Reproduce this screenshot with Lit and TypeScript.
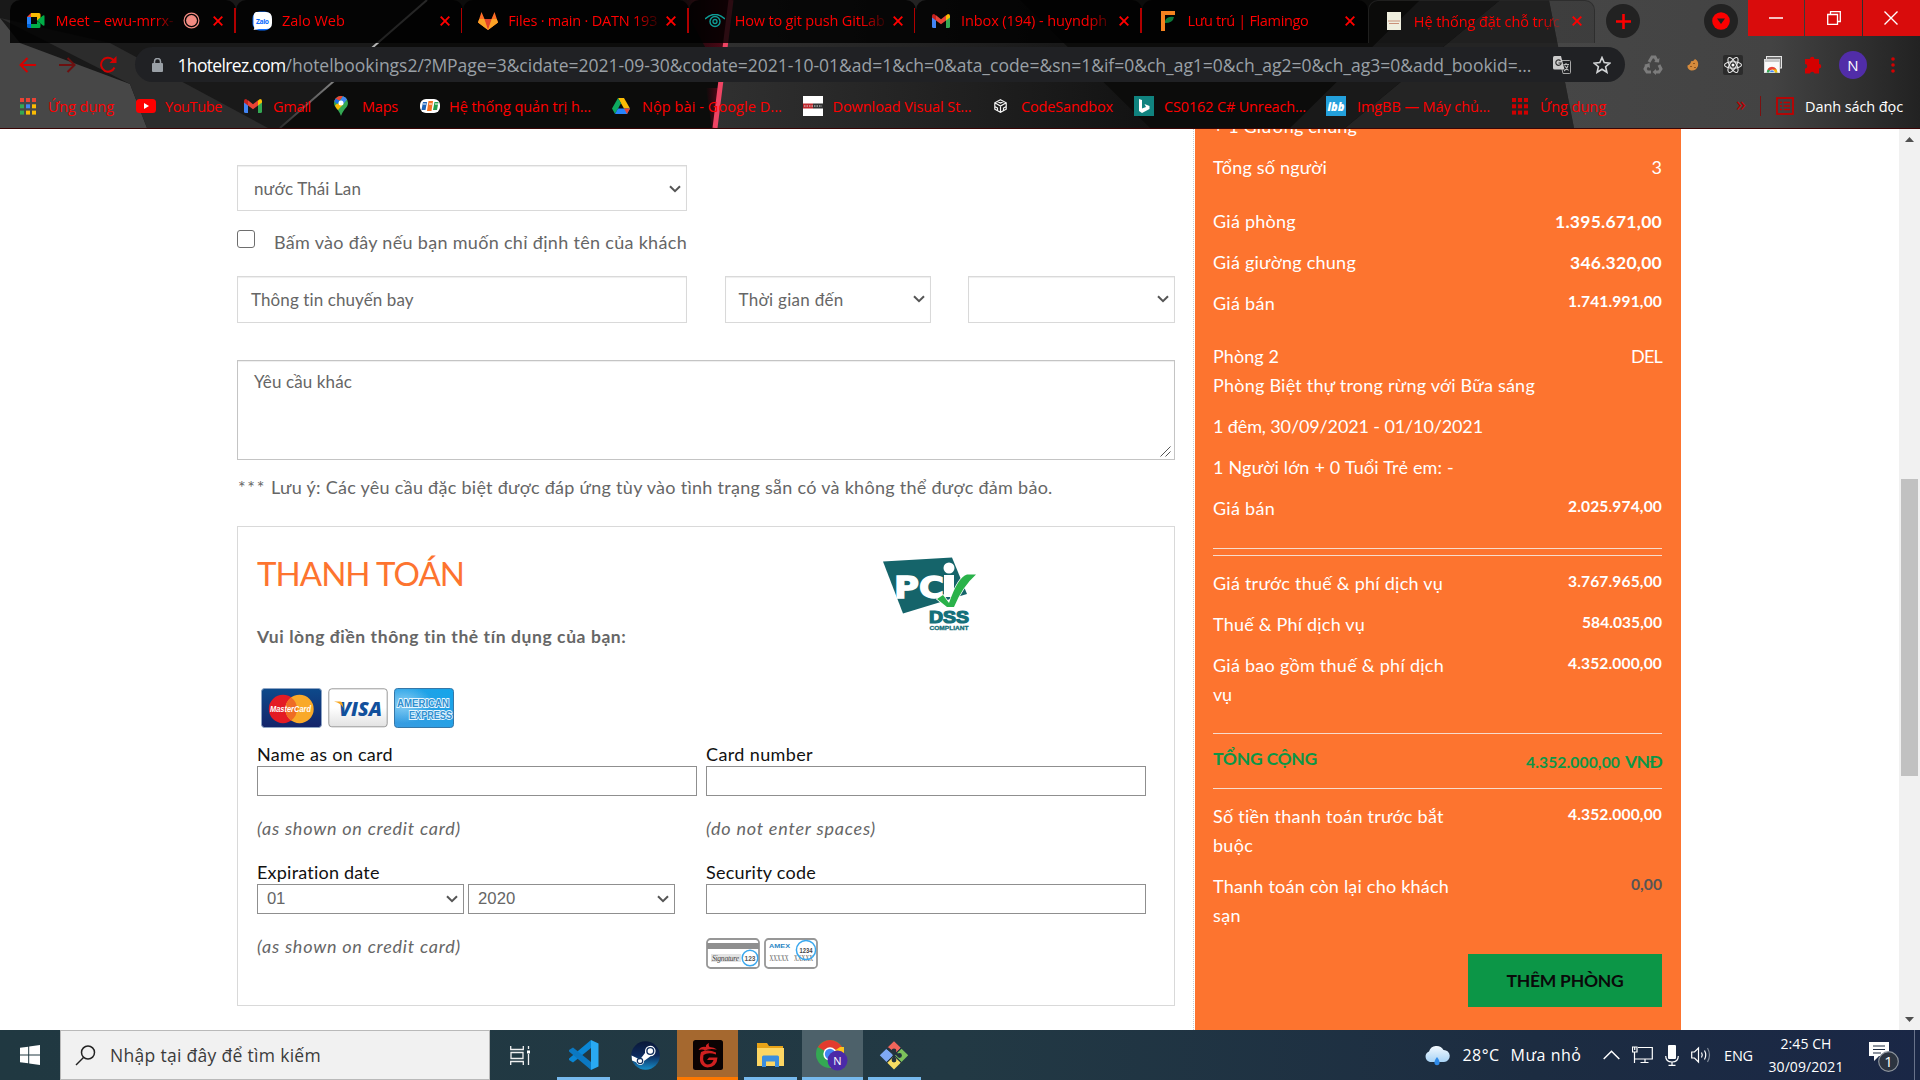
import { LitElement, html, css, svg, nothing } from "lit";
import { customElement, property } from "lit/decorators.js";

/* Text run that tracks its letters so that it fills a given measure. */
@customElement("fit-text")
class FitText extends LitElement {
  @property({ type: Number }) w = 0;
  static styles = css`
    :host { display: inline-block; white-space: pre; }
  `;
  render() { return html`<slot></slot>`; }
  firstUpdated() {
    const n = (this.textContent || "").length;
    const natural = this.getBoundingClientRect().width;
    if (this.w && n > 1) this.style.letterSpacing = `${((this.w - natural) / n).toFixed(3)}px`;
  }
}

const fit = (text: string, w: number) => html`<fit-text .w=${w}>${text}</fit-text>`;

/* ---------- icons ---------- */
const icon = (w: number, h: number, body: unknown, vb = `0 0 ${w} ${h}`) =>
  html`<svg width=${w} height=${h} viewBox=${vb} fill="none" preserveAspectRatio="none">${body}</svg>`;

const meet = icon(19, 17, svg`<path d="M5 1V5H1z" fill="#ea4335"/><path d="M5 1H13Q14.500 1 14.500 2.500V6L11 9V5H5z" fill="#fbbc04"/><path d="M1 5H5V12H1z" fill="#2684fc"/><path d="M1 12H5V16H2.500Q1 16 1 14.500z" fill="#0066da"/><path d="M5 12H11V9L14.500 11.500V14.500Q14.500 16 13 16H5z" fill="#00ac47"/><path d="M11 8.500L17 3.500Q18.500 3 18.500 4V13Q18.500 14 17 13.500z" fill="#00ac47"/>`);
const zalo = icon(20, 20, svg`<rect x=".5" y=".5" width="19" height="19" rx="7" fill="#0a6cff"/><path d="M4 1H14Q20 1 20 8V12Q20 18 14 18H7L1.500 19Q3 17 1.500 14V6Q1.500 2 4 1z" fill="#fff"/><text x="4" y="12.500" font-size="6.800" font-weight="700" textLength="13" font-family="Open Sans, sans-serif" fill="#0a6cff">Zalo</text>`);
const gitlab = icon(20, 18, svg`<path d="M10 18L0 10.500 3.500 0 6.500 7H13.500L16.500 0 20 10.500z" fill="#fc6d26"/><path d="M10 18L6.300 7H13.700z" fill="#e24329"/><path d="M10 18L0 10.500 1.300 7H6.300z" fill="#fca326"/><path d="M10 18L20 10.500 18.700 7H13.700z" fill="#fca326"/>`);
const eye = icon(20, 14, svg`<path d="M0 5Q10-4 20 5" stroke="#0e9c96" stroke-width="1.600"/><circle cx="10" cy="7.500" r="5" stroke="#0e9c96" stroke-width="1.400"/><circle cx="10" cy="7.500" r="2" stroke="#0e9c96" stroke-width="1.300"/>`);
const gmail = icon(18, 14, svg`<path d="M0 2V12.500Q0 14 1.500 14H4V5z" fill="#4285f4"/><path d="M18 2V12.500Q18 14 16.500 14H14V5z" fill="#34a853"/><path d="M0 2Q0 0 2 0L4 1.500V6.500L0 3.500z" fill="#c5221f"/><path d="M18 2Q18 0 16 0L14 1.500V6.500L18 3.500z" fill="#fbbc04"/><path d="M4 1.300L9 5.200 14 1.300V6.500L9 10.300 4 6.500z" fill="#ea4335"/>`);
const flamingo = icon(15, 20, svg`<path d="M1 0H15V4H5V20H1z" fill="#f5821f"/><path d="M5 10Q7 5 14 6Q13 12 5 12z" fill="#0b7a3b"/>`);
const doc = icon(14, 18, svg`<rect width="14" height="18" fill="#efeede"/><path d="M1 9H13M2 11.500H12" stroke="#c99078" stroke-width="1"/>`);
const closeX = icon(10, 10, svg`<path d="M.7.7L9.300 9.300M9.300.7L.7 9.300" stroke="#ff0000" stroke-width="1.900"/>`);
const record = icon(17, 17, svg`<circle cx="8.500" cy="8.500" r="7.400" stroke="#f28b82" stroke-width="1.200"/><circle cx="8.500" cy="8.500" r="5.400" fill="#f28b82"/>`);
const gridDots = (c: string[]) => icon(16, 17, svg`${c.map((f, i) => svg`<rect x=${(i % 3) * 6} y=${Math.floor(i / 3) * 6.3} width="4" height="4" fill=${f}/>`)}`);
const apps = gridDots(["#ea4335", "#ea4335", "#ea4335", "#34a853", "#4285f4", "#fbbc04", "#34a853", "#fbbc04", "#fbbc04"]);
const appsRed = gridDots(Array(9).fill("#d00000"));
const youtube = icon(20, 14, svg`<rect width="20" height="14" rx="3.500" fill="#f00"/><path d="M8 4L13 7 8 10z" fill="#fff"/>`);
const maps = icon(14, 20, svg`<path d="M7 0A7 7 0 0 1 14 7Q14 10 10.500 13.500Q8 17 7 20Q6 17 3.500 13.500Q0 10 0 7A7 7 0 0 1 7 0" fill="#34a853"/><path d="M1.700 2.500A7 7 0 0 1 9 .3L3.200 7.500 .2 5z" fill="#ea4335"/><path d="M9 .3A7 7 0 0 1 13 3.500L8.500 9 6 5z" fill="#4285f4"/><path d="M3.200 7.500L1 9.500Q1.500 11.500 4 14L9.500 8z" fill="#fbbc04"/><path d="M1.700 2.500L.3 5.500 3.500 8 6 5z" fill="#1a73e8"/><circle cx="7" cy="7" r="2.500" fill="#fff"/>`);
const fpt = icon(20, 14, svg`<rect width="20" height="14" rx="6" fill="#fff"/><path d="M3 3H7L5.500 11H1.500z" fill="#1d63b8"/><path d="M8.500 2H13L11.500 12H7z" fill="#f37021"/><path d="M14.500 3H18.500L17 11H13z" fill="#22a04b"/><path d="M3 5H6M9 5H12M15 5H18" stroke="#fff" stroke-width="1"/>`);
const drive = icon(18, 16, svg`<path d="M6 0H12L18 10.500H12z" fill="#fbbc04"/><path d="M6 0L9 5.200 3 16 0 10.500z" fill="#0da960"/><path d="M3 16L6 10.500H18L15 16z" fill="#2684fc"/><path d="M12 10.500H18L15 16z" fill="#ea4335"/>`);
const vsDownload = icon(20, 20, svg`<rect width="20" height="20" fill="#fff"/><rect y="7.500" width="10" height="5" fill="#c0282d"/><rect x="10" y="7.500" width="10" height="5" fill="#333"/><path d="M1 10H19" stroke="#ddd" stroke-width="1" stroke-dasharray="1.500 1"/>`);
const sandbox = icon(13, 14, svg`<path d="M6.500.8L12.200 3.800V10.200L6.500 13.300.8 10.200V3.800zM.8 3.800L6.500 7 12.200 3.800M6.500 7V13M3.500 2.400L6.500 4 9.500 2.400M.8 7.500L3.500 9V11.500M12.200 7.500L9.500 9V11.500" stroke="#f4f4f4" stroke-width="1.200"/>`);
const bing = icon(20, 20, svg`<rect width="20" height="20" fill="#10837f"/><path d="M5 3L8 4V12.500L12 11 10.500 8 15.500 10V13L8 17 5 15z" fill="#fff"/>`);
const ibb = icon(20, 20, svg`<rect width="20" height="20" fill="#23a0dc"/><text x="1.500" y="14.500" font-size="13" font-style="italic" font-weight="800" textLength="17" lengthAdjust="spacingAndGlyphs" font-family="Open Sans, sans-serif" fill="#fff">ibb</text>`);

const back = icon(17, 16, svg`<path d="M17 8H2M8.500 1L1.500 8 8.500 15" stroke="#d40000" stroke-width="2"/>`);
const forward = icon(17, 16, svg`<path d="M0 8H15M8.500 1L15.500 8 8.500 15" stroke="#6d1010" stroke-width="2"/>`);
const reload = icon(18, 17, svg`<path d="M15.500 11.500A7 7 0 1 1 13.500 3.200L16 5.600" stroke="#d40000" stroke-width="2"/><path d="M17.500 0V7H10.500z" fill="#d40000"/>`);
const lock = icon(11, 14, svg`<rect y="5" width="11" height="9" rx="1" fill="#9aa0a6"/><path d="M2.500 5V3.500A3 3 0 0 1 8.500 3.500V5" stroke="#9aa0a6" stroke-width="1.500"/>`);
const translate = icon(18, 18, svg`<path d="M7 4.500H16.500Q17.500 4.500 17.500 5.500V16.500Q17.500 17.500 16.500 17.500H10z" stroke="#a8a8a8" stroke-width="1"/><path d="M1.500 0H8L11.500 13.500H1.500Q0 13.500 0 12V1.500Q0 0 1.500 0" fill="#cbcbcb"/><path d="M7.500 4.800A2.700 2.700 0 1 0 8.200 7H5.500" stroke="#333" stroke-width="1.200"/><path d="M10.500 8.500H16M13 7V8.500M11.500 9.500L15.500 14.500M15 9.500Q14 13.500 11 15" stroke="#bbb" stroke-width="1.100"/>`);
const star = icon(18, 18, svg`<path d="M9 1.500L11.200 6.600 16.800 7.100 12.600 10.700 13.900 16.200 9 13.200 4.100 16.200 5.400 10.700 1.200 7.100 6.800 6.600z" stroke="#d2d4d6" stroke-width="1.600"/>`);
const recycle = icon(20, 20, svg`<g stroke="#7c7c7c" stroke-width="3"><path d="M6 7L9 2H12L14 6"/><path d="M16 10L18 14 16 17H12"/><path d="M8 17H4L2 14 4 10"/></g><path d="M11 7L16 7.500 16.500 3zM13 14V20L9.500 17zM1 10L6.500 8 7 13z" fill="#7c7c7c"/>`);
const cookie = icon(12, 12, svg`<path d="M8 0Q12 2 11 7Q9 12 4 11.500Q0 10 .5 6.500Q4 5 4 2Q6 3 8 0" fill="#d68b3c"/><path d="M4 7V8M7 4V5M8 8V9" stroke="#6b3a10" stroke-width="1.300"/>`);
const react = icon(20, 20, svg`<rect width="20" height="20" rx="2" fill="#2b2b2b"/><g stroke="#e8e8e8" stroke-width="1.100"><ellipse cx="10" cy="10" rx="8.500" ry="3.300"/><ellipse cx="10" cy="10" rx="8.500" ry="3.300" transform="rotate(60 10 10)"/><ellipse cx="10" cy="10" rx="8.500" ry="3.300" transform="rotate(120 10 10)"/></g><circle cx="10" cy="10" r="1.500" fill="#fff"/>`);
const webstore = icon(18, 17, svg`<rect x="2.500" y=".5" width="15" height="11.500" fill="#777" stroke="#e6e6e6"/><rect x=".5" y="3.500" width="15" height="13" fill="#fafafa" stroke="#ddd"/><path d="M1 3.500H15.500V6H1z" fill="#c9c9c9"/><path d="M2.700 16.500A5.300 5.300 0 0 1 13.300 16.500z" fill="#34a853"/><path d="M3.400 13.500A5.300 5.300 0 0 1 12.600 13.500L8 15z" fill="#ea4335"/><path d="M12.600 13.500Q13.300 15 13.300 16.500H8V13.500z" fill="#fbbc04"/><path d="M5.500 16.500A2.500 2.500 0 0 1 10.500 16.500z" fill="#4285f4" stroke="#fff" stroke-width=".6"/>`);
const puzzle = icon(18, 18, svg`<path d="M6 3A2.200 2.200 0 0 1 10.400 3H15V8A2.200 2.200 0 0 1 15 12.500V17.500H10.500A2.300 2.300 0 0 0 6 17.500H1V12.500A2.200 2.200 0 0 0 1 8V3z" fill="#d40000"/>`);
const dots3 = icon(4, 16, svg`<circle cx="2" cy="2" r="1.800" fill="#d40000"/><circle cx="2" cy="8" r="1.800" fill="#d40000"/><circle cx="2" cy="14" r="1.800" fill="#d40000"/>`);
const readingList = icon(18, 18, svg`<rect x="1" y="1" width="16" height="16" stroke="#c00000" stroke-width="1.800"/><path d="M4 5.500H6M7.500 5.500H14M4 9H6M7.500 9H14M4 12.500H6M7.500 12.500H14" stroke="#c00000" stroke-width="1.400"/>`);

const chev = icon(12, 8, svg`<path d="M1 1.200L6 6.200 11 1.200" stroke="#555" stroke-width="2"/>`);
const grip = icon(11, 11, svg`<path d="M.5 10.500L10.500.5M5.500 10.500L10.500 5.500" stroke="#555" stroke-width="1"/>`);

const mastercard = icon(61, 40, svg`<defs><linearGradient id="mc" x2="0" y2="1"><stop stop-color="#0d4a8b"/><stop offset="1" stop-color="#14246a"/></linearGradient></defs><rect x=".5" y=".5" width="60" height="39" rx="3" fill="url(#mc)" stroke="#8da4c4"/><circle cx="22" cy="21" r="14.200" fill="#e41b24"/><circle cx="38.500" cy="21" r="14.200" fill="#f9a929"/><path d="M30.200 9.500A14.200 14.200 0 0 1 30.200 32.500A14.200 14.200 0 0 1 30.200 9.500" fill="#ef6c25"/><text x="9" y="23.500" font-size="8.500" font-weight="700" font-style="italic" font-family="Liberation Sans, sans-serif" fill="#fff" textLength="41" lengthAdjust="spacingAndGlyphs">MasterCard</text>`);
const visa = icon(60, 40, svg`<defs><linearGradient id="vs" x2="0" y2="1"><stop offset=".5" stop-color="#fff"/><stop offset="1" stop-color="#e2e2e2"/></linearGradient></defs><rect x=".8" y=".8" width="58.400" height="38" rx="3" fill="url(#vs)" stroke="#999" stroke-width="1"/><text x="11" y="27.500" font-size="20" font-weight="800" font-style="italic" font-family="Open Sans, sans-serif" fill="#12509c" textLength="43" lengthAdjust="spacingAndGlyphs">VISA</text><path d="M6 13.500H12Q14 13.500 14.500 15.500L15.500 20Q13 15 6 13.500" fill="#f7a51d"/>`);
const amex = icon(60, 40, svg`<defs><linearGradient id="ax" x1="1" x2="0" y2="1"><stop stop-color="#13a5ea"/><stop offset="1" stop-color="#3a9be0"/></linearGradient><radialGradient id="ax2" cx=".15" cy=".4" r=".5"><stop stop-color="#8bd0f5"/><stop offset="1" stop-color="#8bd0f5" stop-opacity="0"/></radialGradient></defs><rect x=".5" y=".5" width="59" height="39" rx="3" fill="url(#ax)" stroke="#3577a8"/><rect x="1" y="1" width="58" height="38" rx="3" fill="url(#ax2)"/><g font-size="10.500" font-weight="700" font-family="Liberation Sans, sans-serif" fill="#2f8fd0" stroke="#e6f6ff" stroke-width="1.800" paint-order="stroke"><text x="3" y="19" textLength="52" lengthAdjust="spacingAndGlyphs">AMERICAN</text><text x="15" y="30.500" textLength="43" lengthAdjust="spacingAndGlyphs">EXPRESS</text></g>`);
const pci = icon(94, 75, svg`<path d="M0 4.500L69 .5 84 37 20 56.500z" fill="#15646a"/><g font-family="DejaVu Sans, sans-serif" font-weight="700" fill="#fff"><text x="11" y="40.500" font-size="31" textLength="50" lengthAdjust="spacingAndGlyphs" stroke="#fff" stroke-width="1.400">PC</text></g><circle cx="66" cy="11" r="5.500" fill="#fff"/><path d="M61 18H71V40H61z" fill="#fff"/><path d="M54 42L60 38 66 46Q75 20 84 17.500H93Q79 30 71 50H64z" fill="#2ab24a" stroke="#fff" stroke-width="1.500" paint-order="stroke"/><text x="46" y="66" font-size="17" font-weight="700" font-family="Liberation Sans, sans-serif" fill="#15707a" stroke="#15707a" stroke-width="1.200" textLength="40" lengthAdjust="spacingAndGlyphs">DSS</text><text x="46.500" y="73" font-size="5.500" font-weight="700" font-family="Liberation Sans, sans-serif" fill="#15707a" stroke="#15707a" stroke-width=".3" textLength="39" lengthAdjust="spacingAndGlyphs">COMPLIANT</text>`);
const cvvBack = icon(54, 31, svg`<rect x="1" y="1" width="52" height="29" rx="3.500" fill="#fff" stroke="#979797" stroke-width="1.800"/><rect x="1" y="5" width="52" height="6" fill="#8f8f8f"/><rect x="5" y="16" width="30" height="8" fill="#e3e3e3"/><text x="6" y="23" font-size="7.500" font-style="italic" font-family="Liberation Serif, serif" fill="#444" textLength="27">Signature</text><text x="38.500" y="23" font-size="7.500" font-weight="700" font-family="Liberation Sans, sans-serif" fill="#555" textLength="11" lengthAdjust="spacingAndGlyphs">123</text><circle cx="44" cy="20" r="7.800" stroke="#3aa8ee" stroke-width="1.500"/>`);
const cvvFront = icon(54, 31, svg`<rect x="1" y="1" width="52" height="29" rx="3.500" fill="#fff" stroke="#979797" stroke-width="1.800"/><text x="5" y="10" font-size="6" font-weight="700" font-family="Liberation Sans, sans-serif" fill="#2a86c4" textLength="21" lengthAdjust="spacingAndGlyphs">AMEX</text><g font-family="Liberation Serif, serif" font-size="7.500" fill="#555"><text x="5.500" y="23" textLength="19" lengthAdjust="spacingAndGlyphs">XXXXX</text><text x="30" y="23" textLength="19" lengthAdjust="spacingAndGlyphs">XXXXX</text></g><text x="35.500" y="15" font-size="6.500" font-weight="700" font-family="Liberation Sans, sans-serif" fill="#444" textLength="13" lengthAdjust="spacingAndGlyphs">1234</text><circle cx="42" cy="12" r="9.600" stroke="#3aa8ee" stroke-width="1.500"/>`);

const winLogo = icon(20, 20, svg`<path d="M0 2.800L8.200 1.700V9.500H0zM9.200 1.500L20 0V9.500H9.200zM0 10.500H8.200V18.300L0 17.200zM9.200 10.500H20V20L9.200 18.500z" fill="#fff"/>`);
const searchIcon = icon(21, 21, svg`<circle cx="13" cy="7.500" r="6.500" stroke="#222" stroke-width="1.500"/><path d="M8.500 12.500L1 20" stroke="#222" stroke-width="1.500"/>`);
const taskView = icon(21, 19, svg`<path d="M.7 0V3.500H13.300V0M.7 19V15.500H13.300V19M1 6.500H13V12.500H1zM18.500 0V3M18.500 8V19" stroke="#f0f0f0" stroke-width="1.300"/><rect x="17" y="4.500" width="3" height="3" fill="#fff"/>`);
const vscode = icon(30, 30, svg`<path d="M22 0L29.500 3.500V26.500L22 30z" fill="#29a9f2"/><path d="M22 0V8L4 22.500 0 20V18.500z" fill="#0a86d4"/><path d="M22 30V22L4 7.500 0 10V11.500z" fill="#0b78c2"/>`);
const steam = icon(29, 29, svg`<defs><linearGradient id="st" x2="0" y2="1"><stop stop-color="#0a1838"/><stop offset=".5" stop-color="#0d2a5c"/><stop offset="1" stop-color="#178fca"/></linearGradient></defs><circle cx="14.500" cy="14.500" r="14.300" fill="url(#st)"/><path d="M.6 14.500L9 18.500 14 12V10A5.300 5.300 0 1 1 19.500 15.300L13 20A4 4 0 0 1 5.200 21.300L1 19.500z" fill="#fff"/><circle cx="19.300" cy="10" r="3.400" fill="#fff" stroke="#12305f" stroke-width="1.400"/><circle cx="9" cy="20" r="2.700" stroke="#12305f" stroke-width="1.200"/>`);
const garena = icon(30, 30, svg`<rect width="30" height="30" rx="2.500" fill="#0b0303"/><path d="M16 3Q12 5 13 7Q8 6 5.500 10Q10 9 12 10.500Q16 8 24 9.500Q21 7 16.500 7Q15 5 16 3M8 12Q15 9 23 12.500V14.500Q15 12 10.500 15Q9 23 14 24.500Q19 24.500 20.500 20H14L16 17.500H24.500Q24 27 14.500 27.500Q4 26 8 12" fill="#cf2020"/>`);
const explorer = icon(29, 24, svg`<path d="M1 0H11L13 3H27V22H1z" fill="#e8a317"/><path d="M1 5H28V23H1z" fill="#fdd663"/><path d="M6 24V14Q6 12.500 7.500 12.500H21.500Q23 12.500 23 14V24H19V18.500H10V24z" fill="#3c8ede"/>`);
const chromeIcon = icon(33, 31, svg`<circle cx="14" cy="14" r="14" fill="#34a853"/><path d="M14 14L1.900 7A14 14 0 0 1 26.100 7z" fill="#e33b2e"/><path d="M14 14L26.100 7A14 14 0 0 1 14 28z" fill="#fcc31e"/><path d="M14 14H28V7H24z" fill="#fcc31e"/><circle cx="14" cy="14" r="6.700" fill="#fff"/><circle cx="14" cy="14" r="5.200" fill="#4285f4"/><circle cx="21.500" cy="20.500" r="10" fill="#4b2aa8"/><text x="21.500" y="24.500" text-anchor="middle" font-size="11" font-family="Open Sans, sans-serif" fill="#fff">N</text>`);
const gitIcon = icon(30, 30, svg`<g><rect x="10.500" y="3" width="9.500" height="9.500" transform="rotate(45 15 7.500)" fill="#f0655b"/><rect x="3" y="10.500" width="9.500" height="9.500" transform="rotate(45 7.500 15)" fill="#7fa9f5"/><rect x="18" y="10.500" width="9.500" height="9.500" transform="rotate(45 22.500 15)" fill="#7cc35b"/><rect x="10.500" y="18" width="9.500" height="9.500" transform="rotate(45 15 22.500)" fill="#f8dc62"/></g><path d="M8 8L15 13V22M15 12L20 16" stroke="#22323d" stroke-width="2.400"/><path d="M15 15L22 8M8 22L15 15M15 15L22 22" stroke="#22323d" stroke-width="1"/><circle cx="15" cy="11" r="2.400" fill="#22323d"/><circle cx="15" cy="20" r="2.400" fill="#22323d"/><circle cx="20.500" cy="15.500" r="2.400" fill="#22323d"/>`);
const weather = icon(26, 21, svg`<defs><linearGradient id="cl" x2="0" y2="1"><stop stop-color="#f4faff"/><stop offset="1" stop-color="#a8d3f5"/></linearGradient></defs><path d="M6 17A5.500 5.500 0 0 1 5 6.500A8 8 0 0 1 19.500 5A6 6 0 0 1 20 17z" fill="url(#cl)"/><path d="M13 12Q17 17 15 19.500Q13 21 11 19.500Q9 17 13 12" fill="#2f8bea"/>`);
const trayUp = icon(17, 10, svg`<path d="M.7 9L8.500 1.300 16.300 9" stroke="#fff" stroke-width="1.500"/>`);
const network = icon(21, 18, svg`<path d="M6 1.500H20.300V13H3M13 13V16.500M8.500 16.500H16.500M2.500 6V17M.5 1H5V6H.5zM2.700 1V4" stroke="#fff" stroke-width="1.200"/>`);
const mic = icon(14, 21, svg`<rect x="3" width="8" height="14" rx="1" fill="#fff"/><path d="M.7 11Q.7 17 7 17T13.300 11M7 17V20M3.500 20.300H10.500" stroke="#fff" stroke-width="1.200"/>`);
const speaker = icon(21, 18, svg`<path d="M.7 6H3.500L7.500 2V16L3.500 12H.7z" stroke="#fff" stroke-width="1.200"/><path d="M10.500 6.500Q12 9 10.500 11.500M13.500 4.500Q16 9 13.500 13.500" stroke="#fff" stroke-width="1.200"/><path d="M16.500 2Q20.500 9 16.500 16" stroke="#7d8796" stroke-width="1.200"/>`);
const notice = icon(32, 33, svg`<path d="M0 3H20V17H10L5 22V17H0z" fill="#fff"/><path d="M4 7H16M4 10.500H16M4 14H12" stroke="#1c2a40" stroke-width="1.200"/><circle cx="19.500" cy="22.500" r="9.800" fill="#2c3440" stroke="#8c939c" stroke-width="1.200"/><text x="19.500" y="28" text-anchor="middle" font-size="15" font-family="Open Sans, sans-serif" fill="#fff">1</text>`);

const backdrop = html`<svg class="backdrop" width="1920" height="128" viewBox="0 0 1920 128">
  <defs>
    <linearGradient id="mid"><stop stop-color="#303030"/><stop offset=".6" stop-color="#1f1f1f"/><stop offset="1" stop-color="#121212"/></linearGradient>
    <linearGradient id="glow"><stop stop-color="#5a0014" stop-opacity="0"/><stop offset="1" stop-color="#5a0818"/></linearGradient>
    <linearGradient id="right"><stop stop-color="#464646"/><stop offset=".6" stop-color="#434343"/><stop offset="1" stop-color="#222"/></linearGradient>
    <linearGradient id="ray" x2="0" y2="1"><stop stop-color="#d8d8d8"/><stop offset=".45" stop-color="#aaa"/><stop offset="1" stop-color="#2c2c2c"/></linearGradient>
  </defs>
  <rect width="1920" height="128" fill="#0c0c0b"/>
  <path d="M0 0H427L280 128H0z" fill="#191919"/>
  <path d="M0 18L20 43 130 84 147 128H0z" fill="#474747"/>
  <path d="M0 18L110 43 268 128H147L130 84z" fill="#2c2c2c"/>
  <path d="M427 0L280 128" stroke="url(#ray)" stroke-width="2"/>
  <path d="M732 0H1020L1150 128H715z" fill="url(#mid)"/>
  <path d="M680 0H732L724 60 712 60z" fill="url(#glow)"/>
  <path d="M706 88H720L715 128H712z" fill="url(#glow)"/>
  <path d="M731 0L715 128" stroke="#ef4463" stroke-width="5"/>
  <path d="M1345 128L1500 0H1549L1574 128z" fill="#242424"/>
  <path d="M1500 0L1345 128H1290L1420 0z" fill="#191919"/>
  <path d="M1549 0H1920V128H1574z" fill="url(#right)"/>
</svg>`;

const TABS = [
  { i: meet, t: "Meet – ewu-mrrx-", w: 118, rec: true },
  { i: zalo, t: "Zalo Web", w: 63 },
  { i: gitlab, t: "Files · main · DATN 193", w: 149 },
  { i: eye, t: "How to git push GitLab", w: 150 },
  { i: gmail, t: "Inbox (194) - huyndph", w: 146 },
  { i: flamingo, t: "Lưu trú | Flamingo", w: 121 },
  { i: doc, t: "Hệ thống đặt chỗ trực", w: 146, on: true },
];

/* cell: full width of the entry up to the next one */
const MARKS = [
  { i: apps, t: "Ứng dụng", w: 66, cell: 116, gap: 12 },
  { i: youtube, t: "YouTube", w: 57, cell: 108, gap: 9 },
  { i: gmail, t: "Gmail", w: 38, cell: 90, gap: 11 },
  { i: maps, t: "Maps", w: 36, cell: 86, gap: 14 },
  { i: fpt, t: "Hệ thống quản trị h...", w: 142, cell: 192, gap: 9 },
  { i: drive, t: "Nộp bài - Google D...", w: 140, cell: 191, gap: 12 },
  { i: vsDownload, t: "Download Visual St...", w: 139, cell: 191, gap: 9.5 },
  { i: sandbox, t: "CodeSandbox", w: 92, cell: 140, gap: 14 },
  { i: bing, t: "CS0162 C# Unreach...", w: 142, cell: 192, gap: 10 },
  { i: ibb, t: "ImgBB — Máy chủ...", w: 133, cell: 186, gap: 11 },
  { i: appsRed, t: "Ứng dụng", w: 66, cell: 110, gap: 12 },
];

type Row = { l: [string, number][]; r?: string; rw?: number; k?: string; c?: string };
const ROOMS: Row[] = [
  { l: [["+ 1 Giường chung", 144]] },
  { l: [["Tổng số người", 114]], r: "3", rw: 10, c: "gap12" },
  { l: [["Giá phòng", 83]], r: "1.395.671,00", rw: 107, k: "big", c: "gap25" },
  { l: [["Giá giường chung", 143]], r: "346.320,00", rw: 92, k: "big", c: "gap12" },
  { l: [["Giá bán", 62]], r: "1.741.991,00", rw: 94, k: "bold", c: "gap12" },
  { l: [["Phòng 2", 66]], r: "DEL", rw: 31, c: "gap24" },
  { l: [["Phòng Biệt thự trong rừng với Bữa sáng", 322]] },
  { l: [["1 đêm, 30/09/2021 - 01/10/2021", 270]], c: "gap12" },
  { l: [["1 Người lớn + 0 Tuổi Trẻ em: -", 241]], c: "gap12" },
  { l: [["Giá bán", 62]], r: "2.025.974,00", rw: 94, k: "bold", c: "gap12" },
];
const TAXES: Row[] = [
  { l: [["Giá trước thuế & phí dịch vụ", 230]], r: "3.767.965,00", rw: 94, k: "bold" },
  { l: [["Thuế & Phí dịch vụ", 152]], r: "584.035,00", rw: 80, k: "bold", c: "gap12" },
  { l: [["Giá bao gồm thuế & phí dịch", 231], ["vụ", 19]], r: "4.352.000,00", rw: 94, k: "bold", c: "gap12" },
];
const DUE: Row[] = [
  { l: [["Số tiền thanh toán trước bắt", 231], ["buộc", 40]], r: "4.352.000,00", rw: 94, k: "bold" },
  { l: [["Thanh toán còn lại cho khách", 236], ["sạn", 28]], r: "0,00", rw: 31, k: "bold grey", c: "gap12" },
];

@customElement("app-root")
class AppRoot extends LitElement {
  static styles = css`
    :host { display: flex; flex-direction: column; width: 1920px; height: 1080px; overflow: hidden; background: #fff;
      font-family: Lato, "Open Sans", sans-serif; font-size: 18px; color: #666; }
    * { box-sizing: border-box; }
    svg { display: block; flex: none; }

    .browser { position: relative; height: 129px; flex: none; border-bottom: 1px solid #3a0505; background: #0c0c0b;
      font-family: "Open Sans", "Noto Sans", sans-serif; font-size: 14.5px; color: #ff0000; white-space: nowrap; }
    .backdrop { position: absolute; inset: 0; }
    .strip, .toolbar, .marks { position: relative; display: flex; align-items: center; }
    .strip { height: 43px; padding-left: 10px; }
    .tab { width: 226.400px; height: 43px; flex: none; display: flex; align-items: center; background: rgba(0,0,0,.82);
      border-radius: 10px 10px 0 0; padding: 0 0 2px 15px; }
    .tab.on { background: rgba(10,10,10,.12); border: 1px solid rgba(40,40,40,.7); border-bottom: 0; padding-left: 14px; }
    .fav { width: 21px; display: flex; justify-content: center; margin-right: 9.500px; flex: none; }
    .title { width: 150px; overflow: hidden; flex: none; -webkit-mask-image: linear-gradient(90deg,#000 84%,rgba(0,0,0,.15)); }
    .title.short { width: 118.500px; }
    .rec { width: 31px; display: flex; justify-content: center; padding-left: 3px; }
    .x { width: 26px; display: flex; justify-content: center; }
    .bar { width: 1.5px; height: 25px; background: #b00000; margin-left: 3px; }
    .round { width: 34px; height: 34px; border-radius: 50%; background: #222; display: flex; align-items: center; justify-content: center; flex: none; margin-bottom: 1px; }
    .plus { margin-left: 11.500px; }
    .drop { margin-left: 63.500px; }
    .wins { display: flex; gap: 1px; align-self: flex-start; margin-left: 10px; height: 36px; }
    .win { width: 56.600px; background: #d90c0c; display: flex; align-items: center; justify-content: center; }
    .toolbar { height: 45px; padding: 0 0 2px 19px; }
    .toolbar .fwd { margin: 0 23px; }
    .omni { margin-left: 18px; width: 1490px; height: 35px; border-radius: 18px; background: #202124; display: flex; align-items: center;
      padding-left: 17px; font-size: 17.5px; color: #9aa0a6; flex: none; }
    .host { color: #fff; margin-left: 14.500px; }
    .tr { margin: 0 22px 0 22px; }
    .ext { width: 40px; display: flex; justify-content: center; flex: none; }
    .ext.first { margin-left: 8px; }
    .me { width: 28px; height: 28px; border-radius: 50%; background: #512da8; color: #fff; font-size: 15px; display: flex; align-items: center; justify-content: center; }
    .marks { height: 36px; padding-left: 20px; }
    .mark { display: flex; align-items: center; flex: none; }
    .more { width: 17px; margin-left: 114px; color: #c00000; font-size: 20px; line-height: 20px; margin-top: -4px; }
    .rule { width: 1px; height: 20px; background: #7a1010; margin: 0 15px 0 7px; }
    .reading { display: flex; gap: 11px; align-items: center; color: #fff; }

    .page { flex: none; height: 901px; display: flex; overflow: hidden; }
    .left { width: 956px; padding: 36px 18px 0 0; margin-left: 237px; flex: none; }
    .edge { width: 2px; border-left: 1px dotted #ccc; }
    .box { border: 1px solid #d9d9d9; height: 46px; display: flex; align-items: center; justify-content: space-between; padding: 1px 5px 0 16px;
      font-size: 17px; box-shadow: inset 0 1px 1px rgba(0,0,0,.07); }
    .country { width: 450px; }
    .check { display: flex; gap: 19px; padding-top: 19px; height: 65px; align-items: flex-start; }
    .tick { width: 18px; height: 18px; border: 1.5px solid #6e6e6e; border-radius: 3px; }
    .check .lbl { line-height: 26px; margin-top: -1px; }
    .trio { display: grid; grid-template-columns: 450px 206px 207px; column-gap: 37.500px; height: 47px; }
    .trio .box { height: 47px; padding: 0 5px 1px 13px; }
    .area { margin-top: 37px; height: 100px; border: 1px solid #c4c4c4; padding: 10px 3px 2px 16px; font-size: 17px; line-height: 22px;
      display: flex; flex-direction: column; justify-content: space-between; box-shadow: inset 0 1px 1px rgba(0,0,0,.07); }
    .area svg { align-self: flex-end; }
    .note { line-height: 30px; height: 66px; padding: 12px 0 0 1px; display: flex; gap: 5px; white-space: nowrap; }
    .pay { border: 1px solid #d9d9d9; height: 480px; padding: 0 28px 0 19px; }
    .head { display: flex; height: 161px; }
    .htxt { width: 626px; }
    .h1 { font-size: 33px; line-height: 40px; color: #fd742f; margin-top: 26px; }
    .lead { font-weight: 700; font-size: 17.500px; margin-top: 32px; line-height: 24px; }
    .head svg { margin-top: 30px; }
    .cards { display: flex; gap: 6px; padding-left: 4px; height: 57px; }
    .form { display: grid; grid-template-columns: 440px 440px; column-gap: 9px; }
    .field { height: 118px; }
    .lab { color: #111; height: 21px; line-height: 18px; white-space: nowrap; }
    .inp { height: 30px; border: 1px solid #8f8f8f; }
    .sels { display: flex; gap: 4px; }
    .sel { width: 207px; height: 30px; border: 1px solid #8f8f8f; display: flex; align-items: center; justify-content: space-between; padding: 0 5px 0 9px;
      font-family: "Liberation Sans", sans-serif; font-size: 16.700px; }
    .hint { font-style: italic; line-height: 24px; margin-top: 20px; }
    .cvv { display: flex; gap: 4px; margin-top: 24px; }

    .side { width: 486px; background: #fd742f; color: #fff; padding: 0 19px 0 18px; flex: none; }
    .row { display: flex; justify-content: space-between; line-height: 29px; }
    .rooms { margin-top: -17.500px; }
    .gap12 { margin-top: 12px; }
    .gap24 { margin-top: 24.500px; }
    .gap25 { margin-top: 25px; }
    .ln { display: block; height: 29px; white-space: nowrap; }
    .val { white-space: nowrap; }
    .big { font-weight: 700; font-size: 17.500px; }
    .bold { font-weight: 700; font-size: 15.600px; line-height: 28px; margin-top: -2px; }
    .grey { color: #555; }
    .double { margin-top: 25px; height: 8px; border: solid #f7dccd; border-width: 1px 0; }
    .taxes { margin-top: 13px; }
    .total { margin-top: 24px; height: 56px; border: solid #f7dccd; border-width: 1px 0; display: flex; justify-content: space-between; color: #0c9647; font-weight: 700;
      padding-top: 10px; line-height: 29px; font-size: 17.500px; }
    .sum { display: flex; align-items: baseline; gap: 5px; padding-top: 3px; }
    .sum .n { font-size: 15.600px; }
    .due { margin-top: 13px; }
    .add { margin: 23.500px 0 0 auto; width: 194px; height: 53px; background: #0c9647; color: #0a0a0a; font-weight: 700; font-size: 17.500px; display: flex;
      align-items: center; justify-content: center; }
    .blank { flex: 1; }
    .scroll { width: 21px; background: #f1f1f1; display: flex; flex-direction: column; align-items: center; flex: none; }
    .up { height: 350px; padding-top: 8px; }
    .thumb { width: 17px; height: 297px; background: #c1c1c1; }
    .down { flex: 1; display: flex; align-items: flex-end; padding-bottom: 8px; }

    .task { height: 50px; flex: none; display: flex; align-items: center; background: linear-gradient(90deg,#203841 0%,#223944 50%,#1c2c41 80%,#1a2746 100%);
      font-family: "Open Sans", "Noto Sans", sans-serif; color: #fff; white-space: nowrap; }
    .start { width: 60px; display: flex; justify-content: center; }
    .search { width: 430px; height: 50px; background: #f1f1f1; border: 1px solid #b9b9b9; display: flex; align-items: center; padding-left: 14px; gap: 14px; color: #3b3b3b; font-size: 17.500px; }
    .app { width: 61px; height: 50px; display: flex; justify-content: center; align-items: center; border-bottom: 3px solid transparent; padding-top: 3px; margin-right: 1.200px; flex: none; }
    .view { width: 60px; margin-right: 3px; }
    .run { border-image: linear-gradient(90deg,transparent 8%,#76b9ed 8%,#76b9ed 92%,transparent 92%) 1; border-width: 0 0 3px; }
    .hot { background: #a5682f; border-bottom-color: #fd7800; }
    .act { background: #4d616a; border-bottom-color: #76b9ed; }
    .tray { margin-left: auto; display: flex; align-items: center; font-size: 16px; height: 50px; }
    .temp { margin-left: 13px; }
    .cond { margin-left: 11px; }
    .chevup { margin-left: 21px; }
    .trayi { margin-left: 12px; }
    .lang { margin-left: 12.500px; font-size: 14.5px; }
    .clock { display: flex; flex-direction: column; align-items: center; font-size: 14px; line-height: 23px; width: 76px; margin: 0 25px 0 15px; }
    .desk { width: 6px; height: 50px; border-left: 1px solid #68728a; margin-left: 13px; }
  `;

  private row(r: Row) {
    return html`<div class="row ${r.c || ""}">
      <div>${r.l.map(([t, w]) => html`<span class="ln">${fit(t, w)}</span>`)}</div>
      ${r.r ? html`<div class="val ${r.k || ""}">${fit(r.r, r.rw || 0)}</div>` : nothing}
    </div>`;
  }

  render() {
    return html`
      <header class="browser">
        ${backdrop}
        <div class="strip">
          ${TABS.map((t, n) => html`<div class="tab ${t.on ? "on" : ""}">
            <span class="fav">${t.i}</span>
            <span class="title ${t.rec ? "short" : ""}">${fit(t.t, t.w)}</span>
            ${t.rec ? html`<span class="rec">${record}</span>` : nothing}
            <span class="x">${closeX}</span>
            ${n < 5 ? html`<span class="bar"></span>` : nothing}
          </div>`)}
          <span class="round plus">${icon(15, 15, svg`<path d="M7.500 0V15M0 7.500H15" stroke="#fc0000" stroke-width="2.600"/>`)}</span>
          <span class="round drop">${icon(18, 18, svg`<circle cx="9" cy="9" r="8.800" fill="#fc0000"/><path d="M5 6.500H13L9 12z" fill="#222"/>`)}</span>
          <div class="wins">
            <span class="win">${icon(14, 2, svg`<path d="M0 1H14" stroke="#fff" stroke-width="1.500"/>`)}</span>
            <span class="win">${icon(14, 14, svg`<path d="M.7 3.500H10.500V13.300H.7zM3.500 3.500V.7H13.300V10.500H10.500" stroke="#fff" stroke-width="1.300"/>`)}</span>
            <span class="win">${icon(14, 14, svg`<path d="M.5.5L13.500 13.500M13.500.5L.5 13.500" stroke="#fff" stroke-width="1.400"/>`)}</span>
          </div>
        </div>
        <div class="toolbar">
          ${back}<span class="fwd">${forward}</span>${reload}
          <div class="omni">
            ${lock}
            <span class="host">${fit("1hotelrez.com", 108)}</span>
            <span>${fit("/hotelbookings2/?MPage=3&cidate=2021-09-30&codate=2021-10-01&ad=1&ch=0&ata_code=&sn=1&if=0&ch_ag1=0&ch_ag2=0&ch_ag3=0&add_bookid=...", 1246)}</span>
            <span class="tr">${translate}</span>${star}
          </div>
          <span class="ext first">${recycle}</span><span class="ext">${cookie}</span><span class="ext">${react}</span>
          <span class="ext">${webstore}</span><span class="ext">${puzzle}</span><span class="ext"><span class="me">N</span></span><span class="ext">${dots3}</span>
        </div>
        <div class="marks">
          ${MARKS.map((m) => html`<span class="mark" style="width:${m.cell}px;gap:${m.gap}px">${m.i}${fit(m.t, m.w)}</span>`)}
          <span class="more">»</span><span class="rule"></span>
          <span class="reading">${readingList}${fit("Danh sách đọc", 98)}</span>
        </div>
      </header>

      <main class="page">
        <section class="left">
          <div class="box country">${fit("nước Thái Lan", 107)}${chev}</div>
          <div class="check"><span class="tick"></span><span class="lbl">${fit("Bấm vào đây nếu bạn muốn chỉ định tên của khách", 413)}</span></div>
          <div class="trio">
            <div class="box">${fit("Thông tin chuyến bay", 163)}</div>
            <div class="box">${fit("Thời gian đến", 105)}${chev}</div>
            <div class="box"><span></span>${chev}</div>
          </div>
          <div class="area"><span>${fit("Yêu cầu khác", 98)}</span>${grip}</div>
          <div class="note">${fit("***", 28)}${fit("Lưu ý: Các yêu cầu đặc biệt được đáp ứng tùy vào tình trạng sẵn có và không thể được đảm bảo.", 782)}</div>
          <div class="pay">
            <div class="head">
              <div class="htxt">
                <div class="h1">${fit("THANH TOÁN", 207)}</div>
                <div class="lead">${fit("Vui lòng điền thông tin thẻ tín dụng của bạn:", 370)}</div>
              </div>
              ${pci}
            </div>
            <div class="cards">${mastercard}${visa}${amex}</div>
            <div class="form">
              <div class="field"><div class="lab">${fit("Name as on card", 136)}</div><div class="inp"></div><div class="hint">${fit("(as shown on credit card)", 204)}</div></div>
              <div class="field"><div class="lab">${fit("Card number", 107)}</div><div class="inp"></div><div class="hint">${fit("(do not enter spaces)", 170)}</div></div>
              <div class="field"><div class="lab">${fit("Expiration date", 123)}</div>
                <div class="sels"><div class="sel">${fit("01", 18)}${chev}</div><div class="sel">${fit("2020", 37.5)}${chev}</div></div>
                <div class="hint">${fit("(as shown on credit card)", 204)}</div></div>
              <div class="field"><div class="lab">${fit("Security code", 110)}</div><div class="inp"></div><div class="cvv">${cvvBack}${cvvFront}</div></div>
            </div>
          </div>
        </section>
        <div class="edge"></div>
        <aside class="side">
          <div class="rooms">${ROOMS.map((r) => this.row(r))}</div>
          <div class="double"></div>
          <div class="taxes">${TAXES.map((r) => this.row(r))}</div>
          <div class="total"><span>${fit("TỔNG CỘNG", 104)}</span><span class="sum"><span class="n">${fit("4.352.000,00", 94)}</span>${fit("VNĐ", 37)}</span></div>
          <div class="due">${DUE.map((r) => this.row(r))}</div>
          <div class="add">${fit("THÊM PHÒNG", 117)}</div>
        </aside>
        <div class="blank"></div>
        <div class="scroll">
          <div class="up">${icon(9, 5, svg`<path d="M0 5L4.500 0 9 5z" fill="#505050"/>`)}</div>
          <div class="thumb"></div>
          <div class="down">${icon(9, 5, svg`<path d="M0 0L4.500 5 9 0z" fill="#505050"/>`)}</div>
        </div>
      </main>

      <footer class="task">
        <span class="start">${winLogo}</span>
        <div class="search">${searchIcon}${fit("Nhập tại đây để tìm kiếm", 211)}</div>
        <span class="app view">${taskView}</span>
        <span class="app run">${vscode}</span>
        <span class="app">${steam}</span>
        <span class="app hot">${garena}</span>
        <span class="app run">${explorer}</span>
        <span class="app act">${chromeIcon}</span>
        <span class="app run">${gitIcon}</span>
        <div class="tray">
          ${weather}
          <span class="temp">${fit("28°C", 37)}</span>
          <span class="cond">${fit("Mưa nhỏ", 71)}</span>
          <span class="chevup">${trayUp}</span>
          <span class="trayi">${network}</span>
          <span class="trayi">${mic}</span>
          <span class="trayi">${speaker}</span>
          <span class="lang">${fit("ENG", 29)}</span>
          <div class="clock">${fit("2:45 CH", 51)}${fit("30/09/2021", 75)}</div>
          ${notice}
          <span class="desk"></span>
        </div>
      </footer>
    `;
  }
}
